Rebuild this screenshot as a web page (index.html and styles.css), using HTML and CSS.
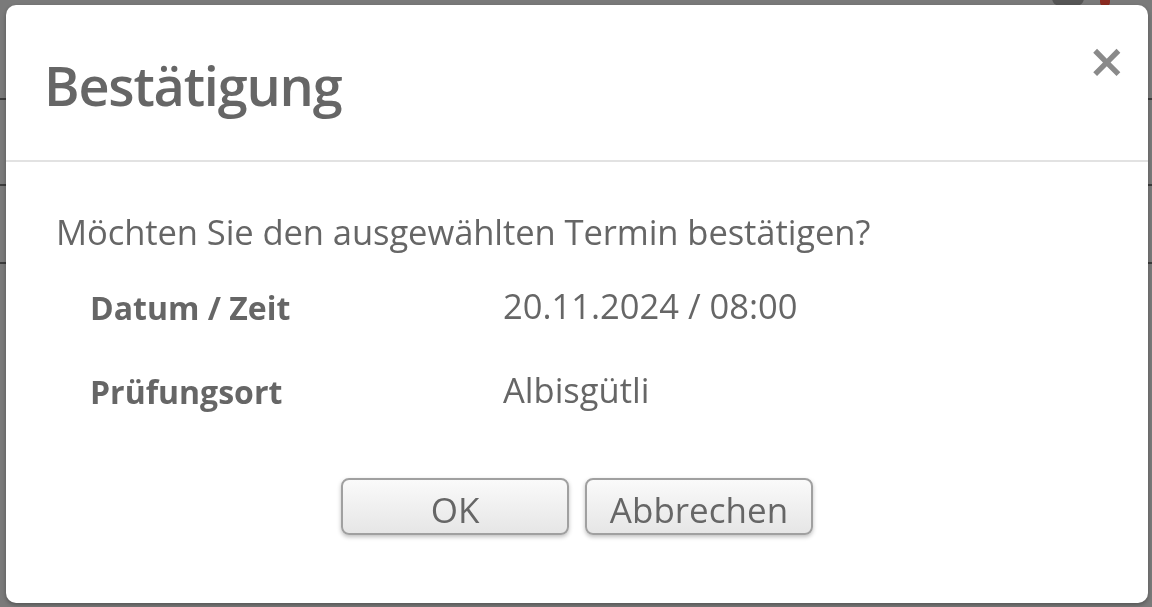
FILE: index.html
```html
<!DOCTYPE html>
<html lang="de">
<head>
  <meta charset="UTF-8" />
  <meta name="viewport" content="width=device-width, initial-scale=1.0"/>
  <title>Bestätigung</title>
  <link rel="stylesheet" href="styles.css">
</head>
<body>
  <div class="page">
    <div class="page-top">
      <span class="avatar"></span>
      <span class="dot"></span>
    </div>
    <div class="page-row"></div>
    <div class="page-row short"></div>
  </div>

  <div class="overlay">
    <div class="modal">
      <div class="modal-header">
        <h2 class="modal-title">Bestätigung</h2>
        <button class="close" type="button">&times;</button>
      </div>
      <div class="modal-body">
        <p class="question">Möchten Sie den ausgewählten Termin bestätigen?</p>
        <table class="details">
          <tr>
            <th>Datum / Zeit</th>
            <td>20.11.2024 / 08:00</td>
          </tr>
          <tr>
            <th>Prüfungsort</th>
            <td>Albisgütli</td>
          </tr>
        </table>
        <div class="actions">
          <button class="btn" type="button">OK</button>
          <button class="btn" type="button">Abbrechen</button>
        </div>
      </div>
    </div>
  </div>
</body>
</html>
```

FILE: styles.css
```css
:root {
  --overlay: #7a7a7a;
  --text: #666;
  --line: #e2e2e2;
  --font: 'Open Sans', 'Noto Sans', sans-serif;
}

html, body {
  margin: 0;
  height: 100%;
}

body {
  font-family: var(--font);
  background-color: var(--overlay);
  color: var(--text);
  overflow: hidden;
}

/* Page behind the dialog */
.page {
  height: 100%;
}

.page-top {
  height: 100px;
  border-bottom: 2px solid #3c3c3c;
  box-sizing: border-box;
  display: flex;
  justify-content: flex-end;
  gap: 16px;
  padding-right: 42px;
}

.avatar {
  width: 32px;
  height: 8px;
  background: #555;
  border-radius: 0 0 16px 16px;
  margin-top: -2px;
}

.dot {
  width: 10px;
  height: 7px;
  background: #8a2a20;
  border-radius: 0 0 5px 5px;
}

.page-row {
  height: 84px;
  border-bottom: 2px solid #3c3c3c;
}

.page-row.short {
  height: 76px;
}

/* Dialog */
.overlay {
  position: fixed;
  inset: 0;
  padding: 5px 4px 4px 6px;
  box-sizing: border-box;
}

.modal {
  height: 100%;
  background: #fff;
  border-radius: 10px;
  box-shadow: 0 2px 4px rgba(0, 0, 0, 0.3);
  display: flex;
  flex-direction: column;
}

.modal-header {
  height: 157px;
  box-sizing: border-box;
  border-bottom: 2px solid var(--line);
  display: flex;
  align-items: flex-start;
  justify-content: space-between;
  padding: 0 22px 0 38px;
}

.modal-title {
  margin: 43px 0 0;
  font-size: 54px;
  font-weight: 600;
  line-height: 74px;
  letter-spacing: -1.2px;
}

.close {
  margin-top: 28px;
  border: none;
  background: none;
  padding: 0;
  font-family: 'DejaVu Sans', sans-serif;
  font-size: 46px;
  font-weight: bold;
  line-height: 56px;
  color: #8a8a8a;
  cursor: pointer;
}

.modal-body {
  padding: 46px 50px 0 50px;
}

.question {
  margin: 0 0 24px;
  font-size: 34.6px;
  line-height: 48px;
  letter-spacing: -0.1px;
}

.details {
  border-collapse: collapse;
  margin-left: 34px;
}

.details th {
  text-align: left;
  width: 413px;
  font-size: 32px;
  font-weight: bold;
  height: 74px;
  padding: 6px 0 4px;
  vertical-align: top;
}

.details td {
  font-size: 34.5px;
  padding: 2px 0 0;
  vertical-align: top;
}

.actions {
  display: flex;
  justify-content: center;
  gap: 16px;
  margin-top: 30px;
}

.btn {
  width: 228px;
  height: 57px;
  font-family: var(--font);
  font-size: 35px;
  color: var(--text);
  background: linear-gradient(#fafafa, #e6e6e6);
  border: 2px solid #a0a0a0;
  border-radius: 8px;
  box-shadow: 0 2px 4px rgba(0, 0, 0, 0.25);
  padding: 6px 0 0;
  line-height: 46px;
  cursor: pointer;
}
```
